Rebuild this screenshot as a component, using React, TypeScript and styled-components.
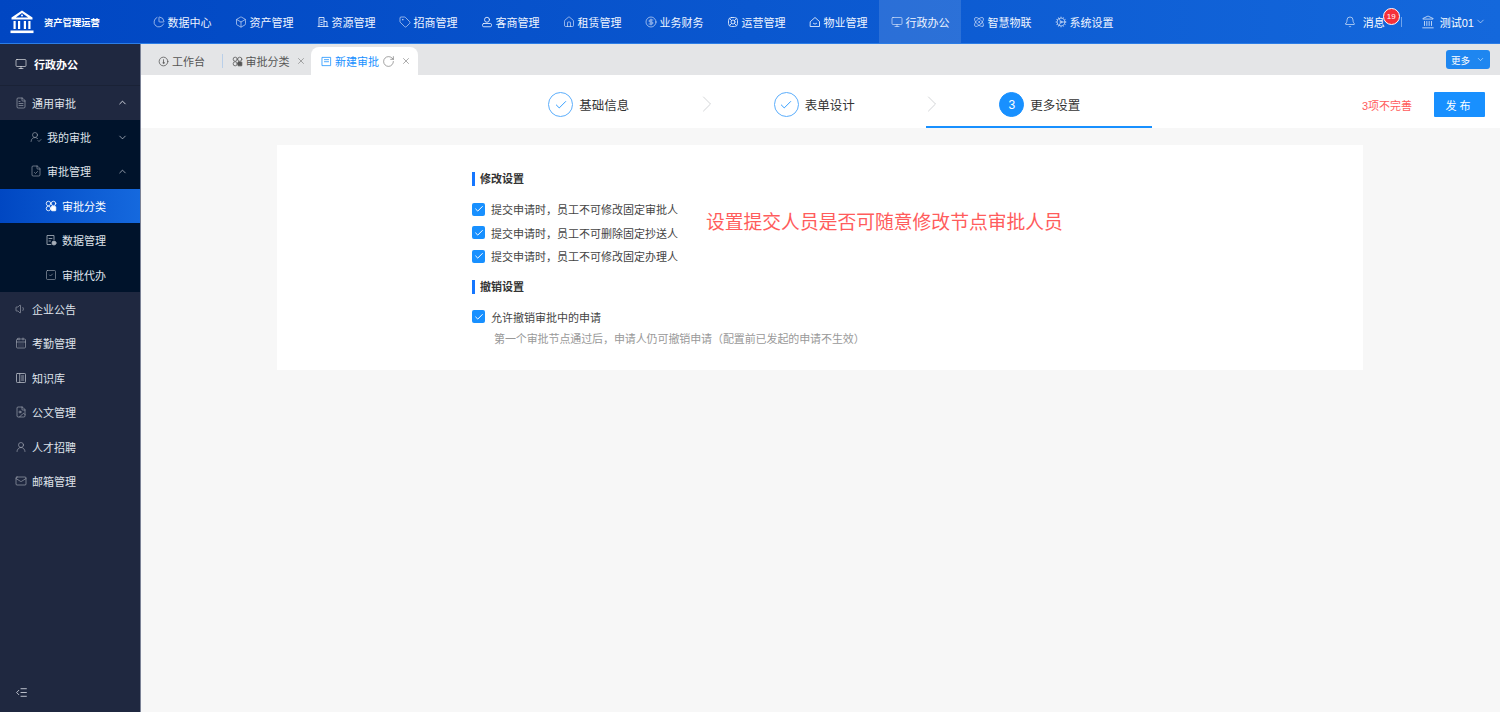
import React from "react";
import styled, { createGlobalStyle } from "styled-components";
import {
  Atom,
  Bell,
  Box,
  CalendarDays,
  ChartPie,
  ChevronDown,
  ChevronRight,
  ChevronUp,
  CircleDollarSign,
  Cog,
  FileCheck,
  FileImage,
  FileText,
  House,
  IndentDecrease,
  Landmark,
  Mail,
  Monitor,
  RotateCw,
  SquareCheck,
  Tag,
  UserRound,
  UserRoundCheck,
  Volume1,
  X,
  Check,
} from "lucide-react";

const GlobalStyle = createGlobalStyle`
  * {
    box-sizing: border-box;
  }
  html, body {
    margin: 0;
    padding: 0;
    height: 100%;
  }
  body {
    font-family: "Liberation Sans", "Noto Sans CJK SC", sans-serif;
    font-size: 11px;
    color: #333;
    background: #f7f7f7;
  }
`;

const Page = styled.div`
  display: flex;
  flex-direction: column;
  height: 100vh;
  overflow: hidden;
`;

const Header = styled.header`
  flex: 0 0 44px;
  display: flex;
  align-items: stretch;
  background: linear-gradient(90deg, #0046c2 0%, #1468dc 100%);
  border-bottom: 1px solid #2c7de6;
  color: #fff;
`;

const Brand = styled.div`
  flex: 0 0 141px;
  display: flex;
  align-items: center;
  gap: 10px;
  padding-left: 10px;
  font-size: 9.3px;
  font-weight: 700;
  white-space: nowrap;
`;

const TopNav = styled.nav`
  display: flex;
  flex: 1;
`;

const TopItem = styled.div<{ $active?: boolean }>`
  flex: 0 0 82px;
  display: flex;
  align-items: center;
  justify-content: center;
  gap: 3px;
  white-space: nowrap;
  color: #eef4ff;
  background: ${(p) => (p.$active ? "rgba(255, 255, 255, 0.13)" : "transparent")};
`;

const UserArea = styled.div`
  display: flex;
  align-items: center;
  padding-right: 14px;
`;

const BellBox = styled.div`
  position: relative;
  display: flex;
  align-items: center;
  gap: 7px;
`;

const Badge = styled.span`
  position: absolute;
  top: -6px;
  right: -15px;
  width: 17px;
  height: 17px;
  border-radius: 50%;
  border: 1px solid #fff;
  background: #f5303a;
  color: #fff;
  font-size: 8px;
  line-height: 15px;
  text-align: center;
`;

const UserDivider = styled.span`
  width: 1px;
  height: 10px;
  margin: 0 19px 0 16px;
  background: #6fa4ec;
`;

const UserName = styled.div`
  display: flex;
  align-items: center;
  gap: 5px;
`;

const UserCaret = styled(ChevronDown)`
  margin-left: -4px;
`;

const Body = styled.div`
  flex: 1;
  min-height: 0;
  display: flex;
`;

const Sidebar = styled.aside`
  flex: 0 0 141px;
  display: flex;
  flex-direction: column;
  background: #1f2840;
  border-right: 1px solid #7b8296;
  color: #dfe3ea;
`;

const SideTitle = styled.div`
  flex: 0 0 41.5px;
  display: flex;
  align-items: center;
  gap: 7px;
  padding-left: 15px;
  color: #fff;
  font-weight: 700;
  border-bottom: 1px solid #1a2236;
`;

const SubGroup = styled.div`
  background: #00132b;
`;

const SideRow = styled.div<{ $level?: number; $active?: boolean }>`
  height: 34.4px;
  display: flex;
  align-items: center;
  gap: 5px;
  padding-left: ${(p) => (p.$level === 2 ? 45 : p.$level === 1 ? 30 : 15)}px;
  padding-right: 12px;
  background: ${(p) =>
    p.$active ? "linear-gradient(90deg, #0047c2 0%, #1569de 100%)" : "transparent"};
  color: ${(p) => (p.$active ? "#fff" : "inherit")};

  & > svg:first-child {
    opacity: ${(p) => (p.$active ? 1 : 0.75)};
  }
`;

const RowCaret = styled.span`
  margin-left: auto;
  display: flex;
`;

const SideFoot = styled.div`
  margin-top: auto;
  height: 40px;
  display: flex;
  align-items: center;
  padding-left: 15px;
`;

const Main = styled.main`
  flex: 1;
  min-width: 0;
  display: flex;
  flex-direction: column;
`;

const TabBar = styled.div`
  flex: 0 0 31px;
  display: flex;
  align-items: flex-end;
  padding: 0 10px 0 0;
  background: #e4e5e7;
  color: #555;
`;

const Tab = styled.div<{ $width: number; $start: number; $active?: boolean }>`
  flex: 0 0 ${(p) => p.$width}px;
  height: 28px;
  display: flex;
  align-items: center;
  gap: 3px;
  padding-left: ${(p) => p.$start}px;
  border-radius: 8px 8px 0 0;
  background: ${(p) => (p.$active ? "#fff" : "transparent")};
  color: ${(p) => (p.$active ? "#1890ff" : "inherit")};
`;

const TabClose = styled(X)<{ $gap: number }>`
  margin-left: ${(p) => p.$gap}px;
  color: #666;
`;

const TabSpinner = styled(RotateCw)`
  color: #666;
`;

const TabDivider = styled.span`
  width: 1px;
  height: 14px;
  margin: 0 0 7px 0;
  background: #b9cfe9;
`;

const MoreButton = styled.button`
  margin: 0 0 6px auto;
  width: 44px;
  height: 19px;
  display: flex;
  align-items: center;
  justify-content: center;
  gap: 6px;
  border: 0;
  padding: 0;
  border-radius: 3px;
  background: #1e86f0;
  color: #fff;
  font-family: inherit;
  font-size: 9.5px;
`;

const StepBar = styled.div`
  flex: 0 0 53px;
  display: flex;
  align-items: stretch;
  padding-left: 334px;
  padding-right: 15px;
  background: #fff;
`;

const Step = styled.div<{ $current?: boolean }>`
  flex: 0 0 225.5px;
  display: flex;
  align-items: center;
  justify-content: center;
  gap: 6px;
  padding: 8px 0 0 2px;
  font-size: 12.5px;
  color: #333;
  border-bottom: 2px solid ${(p) => (p.$current ? "#1890ff" : "transparent")};
`;

const StepMark = styled.span<{ $current?: boolean }>`
  width: 25px;
  height: 25px;
  display: flex;
  align-items: center;
  justify-content: center;
  border-radius: 50%;
  border: 1px solid ${(p) => (p.$current ? "#1890ff" : "#5caefc")};
  background: ${(p) => (p.$current ? "#1890ff" : "#fff")};
  color: ${(p) => (p.$current ? "#fff" : "#1890ff")};
  font-size: 12px;
`;

const StepArrow = styled.span`
  flex: 0 0 0;
  width: 0;
  display: flex;
  align-items: center;
  margin-left: -8px;
  margin-right: 8px;
  margin-top: 4px;
  color: #cfd1d4;

  & > svg {
    flex-shrink: 0;
  }
`;

const StepActions = styled.div`
  margin-left: auto;
  display: flex;
  align-items: center;
  gap: 22px;
  padding-top: 8px;
  padding-bottom: 2px;
`;

const Warn = styled.span`
  font-size: 11px;
  color: #ff5c5c;
`;

const PublishButton = styled.button`
  width: 51px;
  height: 25px;
  border: 0;
  padding: 0;
  border-radius: 1px;
  background: #1890ff;
  color: #fff;
  font-family: inherit;
  font-size: 11px;
  letter-spacing: 3px;
`;

const Content = styled.div`
  flex: 1;
  padding: 17px 137px 0 136px;
  background: #f7f7f7;
`;

const Card = styled.section`
  height: 225px;
  padding: 27px 0 0 195px;
  background: #fff;
`;

const SectionTitle = styled.h3`
  margin: 0 0 16.5px;
  height: 14px;
  padding-left: 5px;
  border-left: 3px solid #1677ff;
  font-size: 11px;
  line-height: 14px;
  font-weight: 700;
  color: #333;
`;

const SettingsRow = styled.div`
  display: flex;
  align-items: flex-start;
  gap: 28px;
  margin-bottom: 17px;
`;

const CheckList = styled.div`
  display: flex;
  flex-direction: column;
  gap: 10.5px;
`;

const CheckRow = styled.label`
  display: flex;
  align-items: center;
  gap: 6px;
  height: 13px;
  color: #444;
`;

const CheckBox = styled.span`
  flex: 0 0 13px;
  height: 13px;
  display: flex;
  align-items: center;
  justify-content: center;
  border-radius: 2px;
  background: #1890ff;
  color: #fff;
`;

const Annotation = styled.div`
  font-size: 18.8px;
  line-height: 26px;
  margin-top: 7px;
  color: #ff5c5c;
  white-space: nowrap;
`;

const Hint = styled.p`
  margin: 6.5px 0 0 22px;
  color: #999;
  letter-spacing: -0.1px;
`;

type GlyphProps = { size?: number; strokeWidth?: number };

const Glyph = ({
  size = 12,
  strokeWidth = 1.2,
  children,
}: GlyphProps & { children: React.ReactNode }) => (
  <svg
    width={size}
    height={size}
    viewBox="0 0 24 24"
    fill="none"
    stroke="currentColor"
    strokeWidth={strokeWidth * 1.4}
    strokeLinecap="round"
    strokeLinejoin="round"
  >
    {children}
  </svg>
);

const BrandLogo = () => (
  <svg width="24" height="24" viewBox="0 0 24 24" fill="#fff">
    <path d="M12 0.5 L22.5 7.5 V9.5 H1.5 V7.5 Z M12 3 L5.8 7.4 H18.2 Z" fillRule="evenodd" />
    <circle cx="12" cy="5.6" r="1" />
    <rect x="3.5" y="11" width="2.2" height="8" />
    <rect x="8" y="11" width="2.2" height="8" />
    <rect x="13.8" y="11" width="2.2" height="8" />
    <rect x="18.3" y="11" width="2.2" height="8" />
    <rect x="0.5" y="20.5" width="23" height="2.6" />
  </svg>
);

const FourDots = (props: GlyphProps) => (
  <Glyph {...props}>
    <circle cx="7" cy="7" r="4.5" />
    <circle cx="17" cy="7" r="4.5" />
    <circle cx="7" cy="17" r="4.5" />
    <rect x="13" y="13" width="8.5" height="8.5" rx="1" fill="currentColor" />
  </Glyph>
);

const FileDot = (props: GlyphProps) => (
  <Glyph {...props}>
    <path d="M12 21H4V3h14v8" />
    <path d="M8 9h6M8 14h3" />
    <circle cx="18" cy="18" r="4" fill="currentColor" />
  </Glyph>
);

const Tower = (props: GlyphProps) => (
  <Glyph {...props}>
    <path d="M4 21V3h10v18" />
    <path d="M14 11h6v10" />
    <path d="M2 21h20M7.5 8h3M7.5 13h3M7.5 17h3" />
  </Glyph>
);

const Contact = (props: GlyphProps) => (
  <Glyph {...props}>
    <circle cx="12" cy="7.5" r="5" />
    <rect x="3" y="15" width="18" height="6.5" rx="2.5" />
  </Glyph>
);

const Swirl = (props: GlyphProps) => (
  <Glyph {...props}>
    <rect x="3" y="3" width="18" height="18" rx="6" />
    <circle cx="12" cy="12" r="4" />
    <path d="M6 6l3 3M18 6l-3 3M6 18l3-3M18 18l-3-3" />
  </Glyph>
);

const SmileHouse = (props: GlyphProps) => (
  <Glyph {...props}>
    <path d="M3 11l9-8 9 8v10H3z" />
    <path d="M8.5 14.5c1.5 2.2 5.5 2.2 7 0" />
  </Glyph>
);

const Dial = (props: GlyphProps) => (
  <Glyph {...props}>
    <circle cx="12" cy="12" r="9.5" />
    <path d="M12 14V8" />
    <circle cx="12" cy="15" r="1.4" />
  </Glyph>
);

const FormSheet = (props: GlyphProps) => (
  <Glyph {...props}>
    <rect x="3" y="3" width="18" height="18" />
    <path d="M7.5 8h9M7.5 12.5h9" />
  </Glyph>
);

const Ledger = (props: GlyphProps) => (
  <Glyph {...props}>
    <rect x="3" y="3" width="18" height="18" rx="1.5" />
    <path d="M9.5 3v18M13 8h4.5M13 12h4.5M13 16h4.5" />
  </Glyph>
);

const icon = { size: 12, strokeWidth: 1.2 };

const topItems = [
  { label: "数据中心", Icon: ChartPie },
  { label: "资产管理", Icon: Box },
  { label: "资源管理", Icon: Tower },
  { label: "招商管理", Icon: Tag },
  { label: "客商管理", Icon: Contact },
  { label: "租赁管理", Icon: House },
  { label: "业务财务", Icon: CircleDollarSign },
  { label: "运营管理", Icon: Swirl },
  { label: "物业管理", Icon: SmileHouse },
  { label: "行政办公", Icon: Monitor, active: true },
  { label: "智慧物联", Icon: Atom },
  { label: "系统设置", Icon: Cog },
];

const lowerItems = [
  { label: "企业公告", Icon: Volume1 },
  { label: "考勤管理", Icon: CalendarDays },
  { label: "知识库", Icon: Ledger },
  { label: "公文管理", Icon: FileImage },
  { label: "人才招聘", Icon: UserRound },
  { label: "邮箱管理", Icon: Mail },
];

const editOptions = [
  "提交申请时，员工不可修改固定审批人",
  "提交申请时，员工不可删除固定抄送人",
  "提交申请时，员工不可修改固定办理人",
];

const Option = ({ text }: { text: string }) => (
  <CheckRow>
    <CheckBox>
      <Check size={10} strokeWidth={2.4} />
    </CheckBox>
    {text}
  </CheckRow>
);

export default function App() {
  return (
    <Page>
      <GlobalStyle />
      <Header>
        <Brand>
          <BrandLogo />
          资产管理运营
        </Brand>
        <TopNav>
          {topItems.map(({ label, Icon, active }) => (
            <TopItem key={label} $active={active}>
              <Icon {...icon} />
              {label}
            </TopItem>
          ))}
        </TopNav>
        <UserArea>
          <BellBox>
            <Bell {...icon} />
            消息
            <Badge>19</Badge>
          </BellBox>
          <UserDivider />
          <UserName>
            <Landmark size={14} strokeWidth={1.2} />
            测试01
            <UserCaret size={11} strokeWidth={1.2} />
          </UserName>
        </UserArea>
      </Header>
      <Body>
        <Sidebar>
          <SideTitle>
            <Monitor {...icon} />
            行政办公
          </SideTitle>
          <SideRow>
            <FileText {...icon} />
            通用审批
            <RowCaret>
              <ChevronUp size={11} strokeWidth={2} />
            </RowCaret>
          </SideRow>
          <SubGroup>
            <SideRow $level={1}>
              <UserRoundCheck {...icon} />
              我的审批
              <RowCaret>
                <ChevronDown size={11} strokeWidth={1.4} />
              </RowCaret>
            </SideRow>
            <SideRow $level={1}>
              <FileCheck {...icon} />
              审批管理
              <RowCaret>
                <ChevronUp size={11} strokeWidth={1.4} />
              </RowCaret>
            </SideRow>
            <SideRow $level={2} $active>
              <FourDots {...icon} />
              审批分类
            </SideRow>
            <SideRow $level={2}>
              <FileDot {...icon} />
              数据管理
            </SideRow>
            <SideRow $level={2}>
              <SquareCheck {...icon} />
              审批代办
            </SideRow>
          </SubGroup>
          {lowerItems.map(({ label, Icon }) => (
            <SideRow key={label}>
              <Icon {...icon} />
              {label}
            </SideRow>
          ))}
          <SideFoot>
            <IndentDecrease size={13} strokeWidth={1.5} />
          </SideFoot>
        </Sidebar>
        <Main>
          <TabBar>
            <Tab $width={81} $start={17}>
              <Dial size={11} />
              工作台
            </Tab>
            <TabDivider />
            <Tab $width={88} $start={8.5}>
              <FourDots size={11} />
              审批分类
              <TabClose size={10} strokeWidth={1.3} $gap={3} />
            </Tab>
            <Tab $width={107} $start={10} $active>
              <FormSheet size={11} />
              新建审批
              <TabSpinner size={13} strokeWidth={1.1} />
              <TabClose size={10} strokeWidth={1.3} $gap={3} />
            </Tab>
            <MoreButton>
              更多
              <ChevronDown size={9} strokeWidth={1.4} />
            </MoreButton>
          </TabBar>
          <StepBar>
            <Step>
              <StepMark>
                <Check size={14} strokeWidth={1.5} />
              </StepMark>
              基础信息
            </Step>
            <StepArrow>
              <ChevronRight size={28} strokeWidth={0.8} />
            </StepArrow>
            <Step>
              <StepMark>
                <Check size={14} strokeWidth={1.5} />
              </StepMark>
              表单设计
            </Step>
            <StepArrow>
              <ChevronRight size={28} strokeWidth={0.8} />
            </StepArrow>
            <Step $current>
              <StepMark $current>3</StepMark>
              更多设置
            </Step>
            <StepActions>
              <Warn>3项不完善</Warn>
              <PublishButton>发布</PublishButton>
            </StepActions>
          </StepBar>
          <Content>
            <Card>
              <SectionTitle>修改设置</SectionTitle>
              <SettingsRow>
                <CheckList>
                  {editOptions.map((text) => (
                    <Option key={text} text={text} />
                  ))}
                </CheckList>
                <Annotation>设置提交人员是否可随意修改节点审批人员</Annotation>
              </SettingsRow>
              <SectionTitle>撤销设置</SectionTitle>
              <Option text="允许撤销审批中的申请" />
              <Hint>第一个审批节点通过后，申请人仍可撤销申请（配置前已发起的申请不生效）</Hint>
            </Card>
          </Content>
        </Main>
      </Body>
    </Page>
  );
}
